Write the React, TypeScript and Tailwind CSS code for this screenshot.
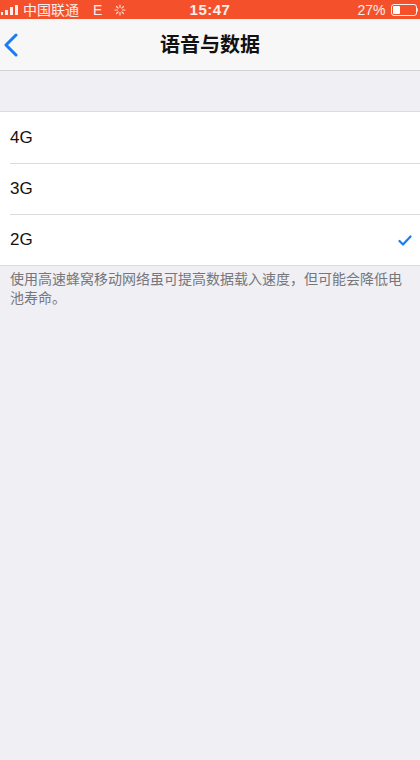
import React from "react";

const FONT = { fontFamily: '"Liberation Sans", "Noto Sans CJK SC", sans-serif' };

const ROWS = [
  { label: "4G", checked: false },
  { label: "3G", checked: false },
  { label: "2G", checked: true },
];

function StatusBar() {
  return (
    <div className="relative flex h-[19px] items-center bg-[#f4502b] text-[14px] leading-none text-white/90">
      <div className="flex items-end gap-[2px] pl-[1px]">
        <span className="h-[3px] w-[2px] bg-white/90" />
        <span className="h-[5px] w-[3px] bg-white/90" />
        <span className="h-[8px] w-[3px] bg-white/90" />
        <span className="h-[10px] w-[3px] bg-white/90" />
      </div>
      <span className="ml-[5px]">中国联通</span>
      <span className="ml-[14px]">E</span>
      <svg className="ml-[12px]" width="12" height="12" viewBox="0 0 12 12" stroke="#ffd9c9" strokeWidth="1.2" strokeLinecap="round">
        <path d="M6 1v2.5M6 8.5V11M1 6h2.5M8.5 6H11M2.5 2.5l1.7 1.7M7.8 7.8l1.7 1.7M2.5 9.5l1.7-1.7M7.8 4.2l1.7-1.7" />
      </svg>
      <span className="absolute left-1/2 -translate-x-1/2 text-[15px] font-bold tracking-[0.5px]">15:47</span>
      <div className="ml-auto flex items-center gap-[5px] pr-[2px]">
        <span>27%</span>
        <div className="flex items-center">
          <div className="flex h-[12px] w-[26px] items-center rounded-[3px] border border-white/90 p-[1px]">
            <div className="h-full w-[7px] rounded-[1px] bg-white" />
          </div>
          <div className="h-[4px] w-[1.5px] rounded-r bg-white/70" />
        </div>
      </div>
    </div>
  );
}

export default function App() {
  return (
    <div className="flex min-h-[760px] w-[420px] flex-col bg-[#efeff4]" style={FONT}>
      <StatusBar />
      <div className="relative flex h-[52px] items-center justify-center border-b border-[#d2d2d6] bg-[#f7f7f7]">
        <svg className="absolute left-[4px] top-[14px]" width="14" height="24" viewBox="0 0 14 24" fill="none" stroke="#1a7cf5" strokeWidth="3" strokeLinecap="round" strokeLinejoin="round">
          <path d="M12 2 2 12l10 10" />
        </svg>
        <span className="text-[20px] font-bold text-[#111]">语音与数据</span>
      </div>
      <div className="h-[40px]" />
      <div className="border-y border-[#dcdce0] bg-white">
        {ROWS.map((r, i) => (
          <div key={r.label} className={`ml-[10px] flex h-[51px] items-center pr-[8px] ${i > 0 ? "border-t border-[#dcdce0]" : ""}`}>
            <span className="text-[17px] text-[#111]">{r.label}</span>
            {r.checked && (
              <svg className="ml-auto" width="14" height="11" viewBox="0 0 14 11" fill="none" stroke="#1a7cf5" strokeWidth="2.2" strokeLinecap="round" strokeLinejoin="round">
                <path d="M1.5 6 5 9.5 12.5 1.5" />
              </svg>
            )}
          </div>
        ))}
      </div>
      <p className="px-[10px] pt-[4px] text-[14px] leading-[19px] text-[#76767b]">
        使用高速蜂窝移动网络虽可提高数据载入速度，但可能会降低电池寿命。
      </p>
    </div>
  );
}
